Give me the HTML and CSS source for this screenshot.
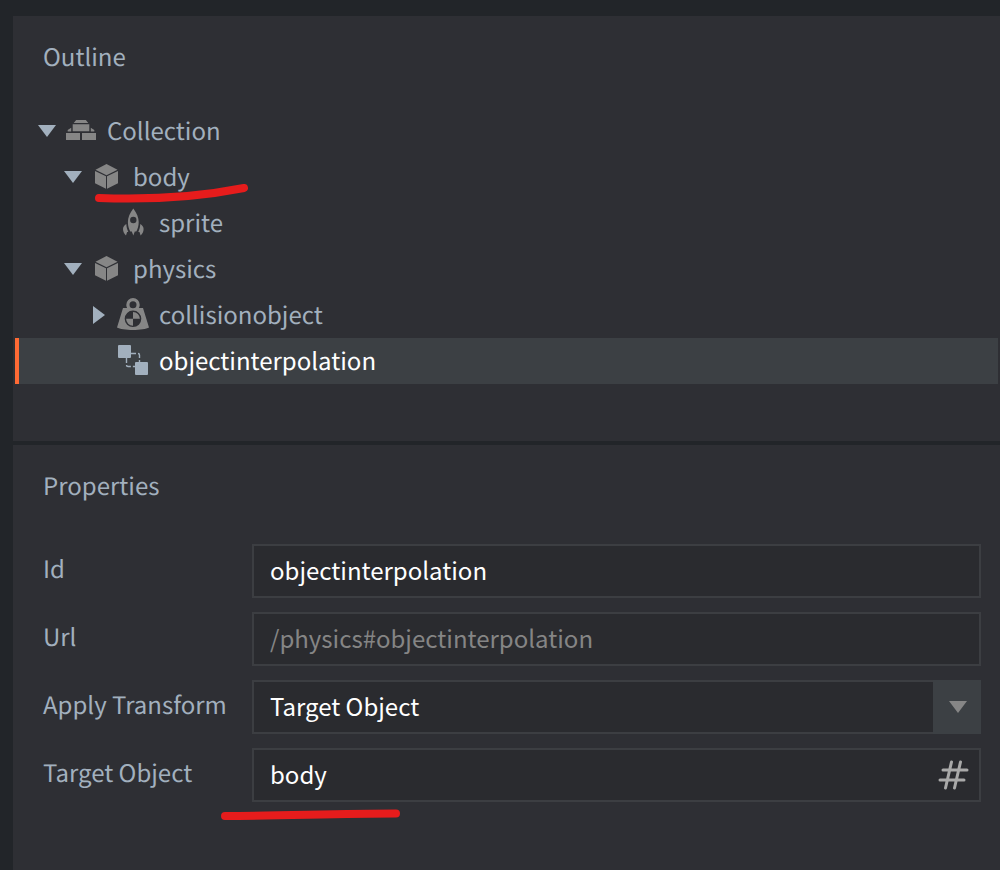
FILE: index.html
```html
<!DOCTYPE html>
<html lang="en">
<head>
<meta charset="utf-8">
<meta name="viewport" content="width=device-width, initial-scale=1">
<title>Outline and Properties</title>
<link rel="stylesheet" href="styles.css">
</head>
<body>
<svg class="symbols" aria-hidden="true">
  <symbol id="down" viewBox="0 0 18 12"><path d="M0 0h18L9 12z"/></symbol>
  <symbol id="right" viewBox="0 0 12 18"><path d="M0 0v18l12-9z"/></symbol>
  <symbol id="cube" viewBox="0 0 32 32"><path d="M15.500 3 26.500 8.800 15.500 14.300 4.500 8.800zM4 10l11 5.300v12.500L4 22.200zM27 10l-11 5.300v12.500l11-5.600z"/></symbol>
</svg>
<main class="editor">
  <section class="panel outline">
    <h2 class="title">Outline</h2>
    <ul class="tree">
      <li class="row">
        <button class="toggle" aria-label="Collapse Collection"><svg class="arrow-down"><use href="#down"/></svg></button>
        <svg class="icon" viewBox="0 0 32 32"><path d="M11.200 5h9.600l2.500 3H8.700zM7.700 9.300h16.600v6.900H7.700zM1 18h14v7H1zM17 18h14v7H17zM2.700 16.500v-1.500l3.500-2.300v3.800zM29.300 16.500v-1.500l-3.500-2.300v3.800z"/></svg>
        <span class="name">Collection</span>
      </li>
      <li class="row level-1">
        <button class="toggle" aria-label="Collapse body"><svg class="arrow-down"><use href="#down"/></svg></button>
        <svg class="icon"><use href="#cube"/></svg>
        <span class="name">body</span>
        <svg class="mark mark-body" viewBox="0 0 154 22" aria-hidden="true"><path d="M5 15C55 17 99 15 150 5"/></svg>
      </li>
      <li class="row level-2">
        <span class="toggle"></span>
        <svg class="icon" viewBox="0 0 32 32"><path fill-rule="evenodd" d="M16.300 1.500c3.500 4.500 5.400 9 5.400 13.500 0 4-1 7-2.400 9.500h-1.500l-1.500 4-1.500-4h-1.500c-1.400-2.500-2.400-5.500-2.400-9.500 0-4.500 1.900-9 5.400-13.500zm0 8.300a3.200 3.200 0 1 0 0 6.400 3.200 3.200 0 0 0 0-6.400z"/><path d="M9.300 17c.2 3 .9 5.500 2 8h-1.200L9 28.500c-2-2-3-4-3-6.500 0-2 1.300-3.800 3.300-5zM23.300 17c-.2 3-.9 5.500-2 8h1.200l1.100 3.500c2-2 3-4 3-6.500 0-2-1.300-3.800-3.300-5z"/></svg>
        <span class="name">sprite</span>
      </li>
      <li class="row level-1">
        <button class="toggle" aria-label="Collapse physics"><svg class="arrow-down"><use href="#down"/></svg></button>
        <svg class="icon"><use href="#cube"/></svg>
        <span class="name">physics</span>
      </li>
      <li class="row level-2">
        <button class="toggle" aria-label="Expand collisionobject"><svg class="arrow-right"><use href="#right"/></svg></button>
        <svg class="icon" viewBox="0 1 32 32"><path fill-rule="evenodd" d="M9.300 6.800a6.700 6.700 0 1 1 13.400 0c0 1.400-.3 2.200-.9 3.200H26l6 19.500c-5 3.300-27 3.300-32 0L6 10h4.200c-.6-1-.9-1.800-.9-3.200zM16 3.300a3.500 3.500 0 1 0 0 7 3.500 3.500 0 0 0 0-7zm0 9.200a8.300 8.300 0 1 0 0 16.600 8.300 8.300 0 0 0 0-16.600z"/><path d="M16 20.800V13.900a6.900 6.900 0 0 1 6.900 6.900zM16 20.800v6.900a6.900 6.900 0 0 1-6.900-6.900z"/></svg>
        <span class="name">collisionobject</span>
      </li>
      <li class="row level-2 selected">
        <span class="toggle"></span>
        <svg class="icon" viewBox="0 0 32 32"><rect x="1" y="0" width="13" height="13" rx="1"/><rect x="18" y="17" width="13" height="13" rx="1"/><path class="link-line" d="M14 8.500h7q1.500 0 1.500 1.500v7M9.500 13v7q0 1.500 1.500 1.500h7"/></svg>
        <span class="name">objectinterpolation</span>
      </li>
    </ul>
  </section>
  <section class="panel properties">
    <h2 class="title">Properties</h2>
    <form class="form">
      <div class="field">
        <label class="label" for="id">Id</label>
        <input class="control" id="id" type="text" value="objectinterpolation">
      </div>
      <div class="field">
        <label class="label" for="url">Url</label>
        <input class="control muted" id="url" type="text" value="/physics#objectinterpolation" readonly>
      </div>
      <div class="field">
        <label class="label" for="transform">Apply Transform</label>
        <div class="wrap">
          <select class="control" id="transform"><option>Target Object</option></select>
          <span class="drop"><svg class="arrow-down"><use href="#down"/></svg></span>
        </div>
      </div>
      <div class="field">
        <label class="label" for="target">Target Object</label>
        <div class="wrap">
          <input class="control" id="target" type="text" value="body">
          <svg class="hash" viewBox="0 0 32 32" aria-hidden="true"><path d="M14.500 3 8.500 29M23.500 3l-6 26M6 11h24M3 21h24"/></svg>
        </div>
        <svg class="mark mark-target" viewBox="0 0 180 14" aria-hidden="true"><path d="M4 8C60 8 115 5.500 175 5.500"/></svg>
      </div>
    </form>
  </section>
</main>
</body>
</html>
```
FILE: styles.css
```css
* {
  box-sizing: border-box;
}

body {
  margin: 0;
  background: #222529;
  color: #a2b0be;
  font: 24px/44px "Noto Sans CJK SC", sans-serif;
  text-rendering: geometricPrecision;
}

.symbols {
  position: absolute;
  width: 0;
  height: 0;
}

.editor {
  display: flex;
  flex-direction: column;
  gap: 4px;
  min-height: 100vh;
  padding: 16px 0 0 13px;
}

.panel {
  background: #2e2f34;
}

.outline {
  padding: 18px 2px 57px;
}

.properties {
  flex: 1;
  padding: 18px 19px 24px 2px;
}

.title {
  margin: 0 0 30px;
  padding-left: 28px;
  font-size: 24px;
  font-weight: 400;
}

.tree {
  margin: 0;
  padding: 0;
  list-style: none;
}

.row {
  position: relative;
  display: flex;
  align-items: center;
  height: 46px;
  padding-left: 23px;
}

.level-1 {
  padding-left: 49px;
}

.level-2 {
  padding-left: 75px;
}

.selected {
  background: #3c4044;
  box-shadow: inset 4px 0 #ff6a34;
  color: #fff;
}

.name {
  padding-bottom: 2px;
}

.toggle {
  display: flex;
  align-items: center;
  justify-content: center;
  width: 18px;
  height: 32px;
  padding: 0;
  border: 0;
  background: none;
}

.arrow-down {
  width: 18px;
  height: 12px;
  fill: #a2b0be;
}

.arrow-right {
  width: 12px;
  height: 18px;
  fill: #a2b0be;
}

.icon {
  width: 32px;
  height: 32px;
  margin: 0 10px 0 9px;
  overflow: visible;
  fill: #868686;
}

.selected .icon {
  fill: #a2b0be;
}

.link-line {
  fill: none;
  stroke: #a2b0be;
  stroke-width: 1.4;
  stroke-dasharray: 5 2;
}

.form {
  display: grid;
  gap: 14px;
  padding: 7px 0 0 28px;
}

.field {
  position: relative;
  display: grid;
  grid-template-columns: 209px 1fr;
}

.label {
  line-height: 48px;
}

.wrap {
  position: relative;
}

.control {
  display: block;
  width: 100%;
  height: 54px;
  padding: 0 16px 3px;
  border: 2px solid #3c3e42;
  border-radius: 0;
  outline: 0;
  appearance: none;
  background: #2a2b2f;
  color: #fff;
  font: inherit;
}

.muted {
  color: #858585;
}

.drop {
  position: absolute;
  top: 0;
  right: 0;
  bottom: 0;
  display: flex;
  align-items: center;
  justify-content: center;
  width: 48px;
  padding-left: 2px;
  background: #3c4044;
  pointer-events: none;
}

.drop .arrow-down {
  fill: #868686;
}

.hash {
  position: absolute;
  top: 11px;
  right: 12px;
  width: 32px;
  height: 32px;
  fill: none;
  stroke: #a9a9a9;
  stroke-width: 3;
  stroke-linecap: round;
}

.mark {
  position: absolute;
  z-index: 1;
  fill: none;
  stroke: #e61c1c;
  stroke-width: 8;
  stroke-linecap: round;
  pointer-events: none;
}

.mark-body {
  top: 29px;
  left: 79px;
  width: 154px;
  height: 22px;
}

.mark-target {
  top: 60px;
  left: 178px;
  width: 180px;
  height: 14px;
}
```
